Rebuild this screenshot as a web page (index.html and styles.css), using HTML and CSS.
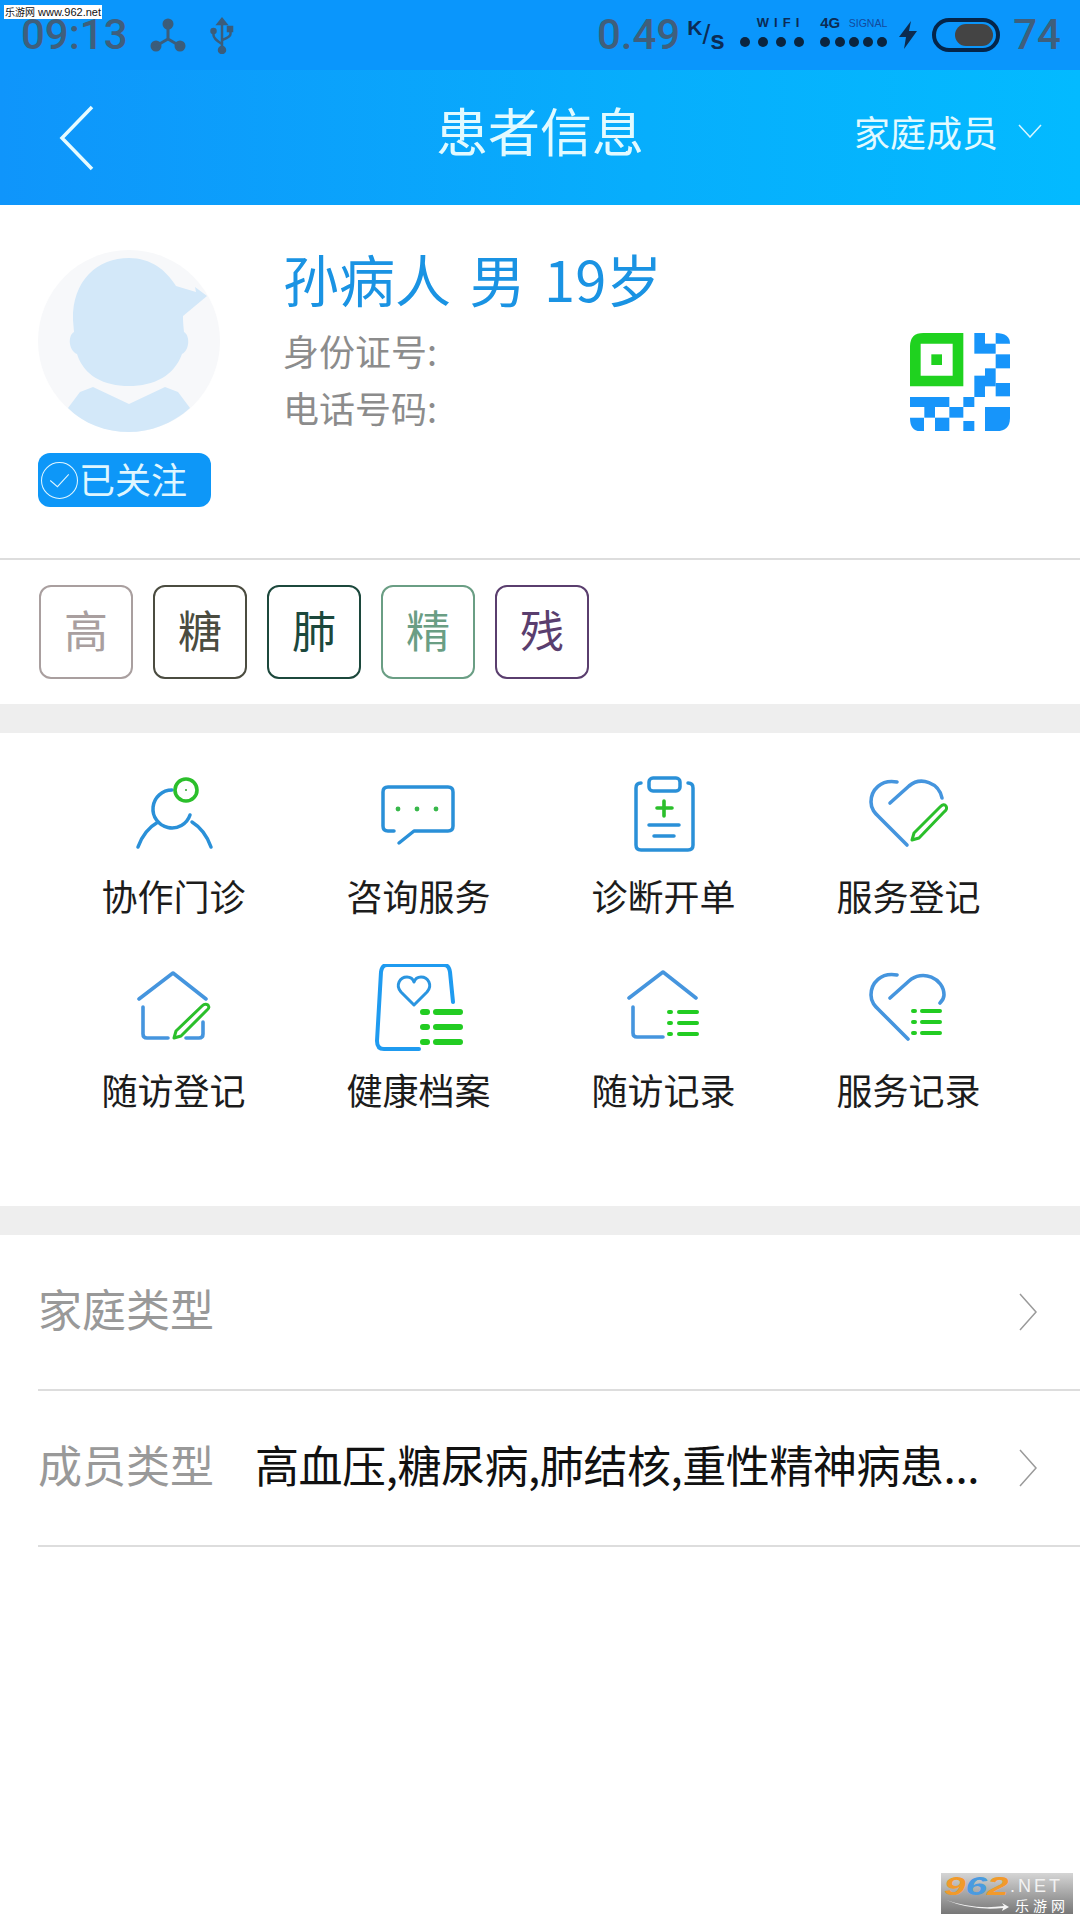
FILE: index.html
```html
<!DOCTYPE html>
<html lang="zh">
<head>
  <meta charset="UTF-8" />
  <title>患者信息</title>
  <link rel="stylesheet" href="styles.css">
</head>
<body>
  <div class="watermark"><span class="watermark-cn">乐游网</span> www.962.net</div>

  <div class="statusbar">
    <div class="status-group">
      <span class="status-num">09:13</span>
      <svg class="status-hub" viewBox="0 0 36 34">
        <g fill="#3b5d7b" stroke="#3b5d7b" stroke-width="3">
          <circle cx="18" cy="6" r="4" />
          <circle cx="6" cy="28" r="4" />
          <circle cx="30" cy="28" r="4" />
          <path d="M18 6V21L6 28M18 21L30 28" fill="none" />
        </g>
      </svg>
      <svg class="status-usb" viewBox="0 0 24 38">
        <g fill="#3b5d7b" stroke="#3b5d7b" stroke-width="2.5">
          <path d="M12 35V3" fill="none" />
          <path d="M8 8L12 3L16 8Z" />
          <circle cx="12" cy="34" r="3" />
          <circle cx="3.5" cy="15" r="2" />
          <rect x="18" y="11" width="4" height="4" />
          <path d="M3.5 15V19Q3.5 23 12 28M20.5 15V18Q20.5 21 12 24" fill="none" />
        </g>
      </svg>
    </div>
    <div class="status-group status-right">
      <span class="status-num">0.49</span>
      <span class="speed-unit"><i class="unit-k">K</i><i class="unit-slash">/</i><i class="unit-s">s</i></span>
      <div class="net-col net-wifi">
        <span class="net-label">WIFI</span>
        <div class="net-dots"><b></b><b></b><b></b><b></b></div>
      </div>
      <div class="net-col net-signal">
        <div class="net-labels"><span class="net-label net-4g">4G</span><span class="net-label net-small">SIGNAL</span></div>
        <div class="net-dots"><b></b><b></b><b></b><b></b><b></b></div>
      </div>
      <svg class="status-bolt" viewBox="0 0 18 28"><path d="M12 0L0 16H7L5 28L18 10H10Z" fill="#0c2c50" /></svg>
      <div class="battery"><span class="battery-fill"></span></div>
      <span class="status-num">74</span>
    </div>
  </div>

  <div class="navbar">
    <div class="nav-left">
      <svg class="nav-back" viewBox="0 0 36 66"><path d="M33 2L3 33L33 64" fill="none" stroke="#e6fbff" stroke-width="3.5" /></svg>
    </div>
    <div class="nav-title">患者信息</div>
    <div class="nav-right">
      <span>家庭成员</span>
      <svg class="nav-down" viewBox="0 0 24 14"><path d="M1 1L12 13L23 1" fill="none" stroke="#d8f6ff" stroke-width="1.5" /></svg>
    </div>
  </div>

  <div class="profile">
    <div class="profile-left">
      <svg class="avatar" viewBox="0 0 182 182">
        <circle cx="91" cy="91" r="91" fill="#f7f8fa" />
        <path d="M35 70C34 30 60 8 91 8C113 8 128 20 138 36L158 42L157 37L169 46L145 66C145 75 146 80 146 82C152 85 152 100 144 104C136 126 116 136 91 136C66 136 46 126 39 104C30 100 30 85 36 82Z" fill="#d3e8f9" />
        <path d="M30 158L42 142L55 137L91 154L127 137L140 142L152 158C134 174 112 182 91 182C68 182 46 174 30 158Z" fill="#d3e8f9" />
      </svg>
      <div class="follow-badge">
        <svg class="follow-check" viewBox="0 0 36 36">
          <circle cx="18" cy="18" r="17.5" fill="none" stroke="#dff6ff" stroke-width="1" />
          <path d="M9 18L16 24L27 12" fill="none" stroke="#dff6ff" stroke-width="1" />
        </svg>
        <span>已关注</span>
      </div>
    </div>
    <div class="profile-info">
      <div class="patient-name">孙病人 男 19岁</div>
      <div class="patient-line patient-line-first">身份证号:</div>
      <div class="patient-line">电话号码:</div>
    </div>
    <svg class="qr" viewBox="0 0 300 294">
      <path d="M40 0H160V160H0V40Q0 0 40 0ZM32 32V128H128V32Z" fill="#1fd21f" fill-rule="evenodd" />
      <rect x="64" y="64" width="32" height="32" fill="#1fd21f" />
      <g fill="#1795fa">
        <rect x="193" y="0" width="32" height="62" />
        <rect x="225" y="32" width="32" height="30" />
        <path d="M257 0Q300 0 300 32H257Z" />
        <rect x="257" y="64" width="43" height="42" />
        <rect x="225" y="106" width="32" height="54" />
        <rect x="193" y="128" width="32" height="64" />
        <rect x="257" y="150" width="43" height="40" />
        <rect x="0" y="192" width="118" height="30" />
        <rect x="43" y="222" width="32" height="32" />
        <rect x="118" y="222" width="42" height="32" />
        <rect x="160" y="192" width="33" height="30" />
        <path d="M0 254H42V294H30Q0 294 0 254Z" />
        <rect x="75" y="254" width="43" height="40" />
        <rect x="160" y="264" width="33" height="30" />
        <path d="M225 222H300V254Q300 294 260 294H225Z" />
      </g>
    </svg>
  </div>

  <div class="tags">
    <span class="tag tag-gao">高</span>
    <span class="tag tag-tang">糖</span>
    <span class="tag tag-fei">肺</span>
    <span class="tag tag-jing">精</span>
    <span class="tag tag-can">残</span>
  </div>

  <div class="band"></div>

  <div class="menu">
    <div class="menu-item">
      <svg class="menu-icon" viewBox="0 0 100 100">
        <g class="line-blue">
          <path d="M48 20A19 19 0 1 0 66 45" />
          <path d="M14 77Q20 60 34 52M68 52Q81 60 87 77" />
        </g>
        <circle class="line-green" cx="62" cy="20" r="11" />
        <circle cx="62" cy="20" r="1" fill="#2fa02f" />
      </svg>
      <div class="menu-label">协作门诊</div>
    </div>
    <div class="menu-item">
      <svg class="menu-icon" viewBox="0 0 100 100">
        <path class="line-blue" d="M25 61H19Q14 61 14 56V22Q14 17 19 17H79Q84 17 84 22V56Q84 61 79 61H45L30 73" />
        <g fill="#38b84a">
          <circle cx="29" cy="39" r="2.4" />
          <circle cx="48" cy="39" r="2.4" />
          <circle cx="67" cy="39" r="2.4" />
        </g>
      </svg>
      <div class="menu-label">咨询服务</div>
    </div>
    <div class="menu-item">
      <svg class="menu-icon" viewBox="0 0 100 100">
        <g class="line-blue">
          <path d="M27 13Q22 13 22 18V75Q22 80 27 80H74Q79 80 79 75V18Q79 13 74 13" />
          <rect x="35" y="8" width="31" height="13" rx="4" />
          <path d="M35 55H65M40 66H60" />
        </g>
        <path class="line-green" d="M43 38H58M50 31V46" />
      </svg>
      <div class="menu-label">诊断开单</div>
    </div>
    <div class="menu-item">
      <svg class="menu-icon" viewBox="0 0 100 100">
        <path class="line-heart" d="M38 12C22 9 12 20 12 32C12 40 17 44 21 48L48 75M31 33L50 16C62 6 80 13 83 28" />
        <path class="line-pen" d="M55 63L81 37Q85 33 87 36Q89 39 85 42L60 68L53 70Z" />
      </svg>
      <div class="menu-label">服务登记</div>
    </div>
    <div class="menu-item">
      <svg class="menu-icon" viewBox="0 4 100 100">
        <path class="line-heart" d="M15 39L49 13L82 39M19 47V74Q19 78 23 78H44M62 78H75Q79 78 79 74V62" />
        <path class="line-pen" d="M52 71L78 46Q81 43 84 45Q86 48 83 50L57 76L50 78Z" />
      </svg>
      <div class="menu-label">随访登记</div>
    </div>
    <div class="menu-item">
      <svg class="menu-icon" viewBox="0 4 100 100">
        <path class="line-doc" d="M84 42L81 12Q80 5 75 5H18Q13 5 12 12L8 81Q8 89 15 89H50" />
        <path class="line-doc line-thin" d="M45 45L32 32C26 25 31 17 38 17C41 17 44 19 45 22C46 19 49 17 52 17C59 17 64 25 58 32Z" />
        <path class="line-list" d="M54 52H58M67 52H91M54 67H58M67 67H91M54 82H58M67 82H91" />
      </svg>
      <div class="menu-label">健康档案</div>
    </div>
    <div class="menu-item">
      <svg class="menu-icon" viewBox="0 4 100 100">
        <path class="line-heart" d="M15 38L49 12L82 38M19 47V73Q19 77 23 77H49" />
        <path class="line-list line-list-small" d="M55 52H57M65 52H83M55 63H57M65 63H83M55 74H57M65 74H83" />
      </svg>
      <div class="menu-label">随访记录</div>
    </div>
    <div class="menu-item">
      <svg class="menu-icon" viewBox="0 4 100 100">
        <path class="line-heart" d="M38 15C22 12 12 23 12 35C12 43 17 47 21 51L49 79M31 38L50 21C63 9 85 18 85 35C85 38 83 41 81 43" />
        <path class="line-list line-list-small" d="M54 51H56M63 51H81M54 62H56M63 62H81M54 73H56M63 73H81" />
      </svg>
      <div class="menu-label">服务记录</div>
    </div>
  </div>

  <div class="band"></div>

  <div class="info-row">
    <span class="info-label">家庭类型</span>
    <span class="info-value"></span>
    <svg class="info-arrow" viewBox="0 0 18 38"><path d="M1 1L17 19L1 37" fill="none" stroke="#9a9a9a" stroke-width="1.5" /></svg>
  </div>
  <div class="info-row">
    <span class="info-label">成员类型</span>
    <span class="info-value">高血压,糖尿病,肺结核,重性精神病患...</span>
    <svg class="info-arrow" viewBox="0 0 18 38"><path d="M1 1L17 19L1 37" fill="none" stroke="#9a9a9a" stroke-width="1.5" /></svg>
  </div>

  <div class="site-logo">
    <div class="logo-top">
      <span class="logo-num"><span class="logo-orange">9</span><span class="logo-blue">6</span><span class="logo-orange">2</span></span>
      <span class="logo-net">.NET</span>
    </div>
    <div class="logo-bottom">
      <svg class="logo-swoosh" viewBox="0 0 66 14"><path d="M2 2Q30 12 60 8L58 5L65 9L58 13L59 10Q28 13 2 2Z" fill="#f4f4f4" /></svg>
      <span class="logo-cn">乐游网</span>
    </div>
  </div>
</body>
</html>
```

FILE: styles.css
```css
* {
  box-sizing: border-box;
}
body {
  margin: 0;
  width: 1080px;
  height: 1920px;
  overflow: hidden;
  position: relative;
  background: #fff;
  font-family: "Noto Sans CJK SC", "Noto Sans", sans-serif;
}

.watermark {
  position: absolute;
  left: 4px;
  top: 5px;
  width: 98px;
  height: 14px;
  background: #fff;
  color: #111;
  font-family: "Liberation Sans", "Noto Sans CJK SC", sans-serif;
  font-size: 11px;
  line-height: 14px;
  white-space: nowrap;
  padding-left: 1px;
}
.watermark-cn {
  font-family: "Noto Sans CJK SC", sans-serif;
  font-size: 10px;
}

.statusbar {
  height: 70px;
  background: #0a96fc;
  display: flex;
  justify-content: space-between;
  align-items: center;
  padding: 0 19px 0 21px;
}
.status-group {
  display: flex;
  align-items: center;
}
.status-num {
  font-family: Roboto, sans-serif;
  font-size: 42px;
  font-weight: 500;
  line-height: 68px;
  color: #3f5f7c;
}
.status-hub {
  width: 36px;
  height: 34px;
  margin-left: 22px;
}
.status-usb {
  width: 24px;
  height: 38px;
  margin-left: 24px;
}
.speed-unit {
  display: flex;
  height: 36px;
  width: 38px;
  margin-left: 7px;
  color: #0c2c55;
  font-family: "Liberation Sans", sans-serif;
  font-weight: 700;
}
.speed-unit i {
  font-style: normal;
  line-height: 1;
}
.unit-k {
  font-size: 21px;
  align-self: flex-start;
}
.unit-slash {
  font-size: 28px;
  font-weight: 400;
  align-self: center;
}
.unit-s {
  font-size: 26px;
  align-self: flex-end;
  margin-top: -4px;
}
.net-col {
  display: flex;
  flex-direction: column;
  height: 30px;
  margin-top: -6px;
  justify-content: space-between;
}
.net-wifi {
  width: 64px;
  margin-left: 15px;
  align-items: flex-end;
}
.net-signal {
  width: 67px;
  margin-left: 16px;
}
.net-label {
  font-family: "Liberation Sans", sans-serif;
  font-size: 13px;
  font-weight: 700;
  line-height: 12px;
  color: #0c2c55;
  letter-spacing: 5px;
}
.net-labels {
  display: flex;
  align-items: flex-end;
  justify-content: space-between;
}
.net-4g {
  letter-spacing: 0;
  font-size: 15px;
}
.net-small {
  font-size: 10.5px;
  font-weight: 400;
  letter-spacing: 0;
  color: #134a9c;
}
.net-dots {
  display: flex;
  width: 100%;
  justify-content: space-between;
}
.net-dots b {
  width: 10px;
  height: 10px;
  border-radius: 50%;
  background: #0a2540;
}
.status-bolt {
  width: 18px;
  height: 28px;
  margin-left: 12px;
}
.battery {
  width: 68px;
  height: 34px;
  margin: 0 13px 0 15px;
  border: 4px solid #04254a;
  border-radius: 17px;
  display: flex;
  justify-content: flex-end;
  align-items: center;
  padding-right: 3px;
}
.battery-fill {
  width: 38px;
  height: 22px;
  border-radius: 11px;
  background: #444;
}

.navbar {
  height: 135px;
  background: linear-gradient(90deg, #0f95fb, #07aefc 60%, #03baff);
  display: grid;
  grid-template-columns: 1fr auto 1fr;
  align-items: center;
  color: #e2faff;
}
.nav-left {
  padding-left: 59px;
  display: flex;
}
.nav-back {
  width: 36px;
  height: 66px;
}
.nav-title {
  font-size: 52px;
  line-height: 64px;
  margin-top: -15px;
}
.nav-right {
  display: flex;
  justify-content: flex-end;
  align-items: center;
  padding-right: 38px;
  font-size: 36px;
  line-height: 50px;
  margin-top: -14px;
}
.nav-down {
  width: 24px;
  height: 14px;
  margin-left: 20px;
}

.profile {
  height: 355px;
  border-bottom: 2px solid #ddd;
  display: flex;
  padding: 45px 70px 0 38px;
}
.profile-left {
  width: 182px;
}
.avatar {
  width: 182px;
  height: 182px;
  display: block;
}
.follow-badge {
  width: 173px;
  height: 54px;
  margin-top: 21px;
  border-radius: 12px;
  background: #0d97f8;
  color: #dff6ff;
  font-size: 36px;
  line-height: 50px;
  display: flex;
  align-items: center;
  padding: 0 0 4px 3px;
}
.follow-check {
  width: 37px;
  height: 37px;
  margin: 4px 1px 0 0;
}
.profile-info {
  margin: -4px 0 0 63px;
}
.patient-name {
  font-size: 56px;
  line-height: 64px;
  color: #1a93e3;
  word-spacing: 6px;
}
.patient-line {
  font-size: 36px;
  line-height: 57px;
  color: #8c8c8c;
}
.patient-line-first {
  margin-top: 12px;
}
.qr {
  width: 100px;
  height: 98px;
  margin: 83px 0 0 auto;
}

.tags {
  height: 144px;
  display: flex;
  gap: 20px;
  padding: 25px 0 0 39px;
}
.tag {
  width: 94px;
  height: 94px;
  border: 2px solid;
  border-radius: 12px;
  font-size: 44px;
  line-height: 84px;
  text-align: center;
}
.tag-gao {
  color: #a99f9f;
}
.tag-tang {
  color: #4b4c40;
}
.tag-fei {
  color: #1c483c;
}
.tag-jing {
  color: #6a9e84;
}
.tag-can {
  color: #5a3e6e;
}

.band {
  height: 29px;
  background: #eee;
}

.menu {
  height: 473px;
  padding: 37px 51px 0;
  display: grid;
  grid-template-columns: repeat(4, 245px);
  grid-auto-rows: 152px;
  row-gap: 42px;
}
.menu-item {
  display: flex;
  flex-direction: column;
  align-items: center;
}
.menu-icon {
  width: 100px;
  height: 100px;
  fill: none;
}
.menu-label {
  font-size: 36px;
  line-height: 50px;
  color: #1c1c1c;
}
.line-blue {
  fill: none;
  stroke: #2a90d8;
  stroke-width: 3.5;
  stroke-linecap: round;
  stroke-linejoin: round;
}
.line-heart {
  fill: none;
  stroke: #4595de;
  stroke-width: 3.6;
  stroke-linecap: round;
  stroke-linejoin: round;
}
.line-green {
  fill: none;
  stroke: #2bbf2b;
  stroke-width: 3.6;
  stroke-linecap: round;
}
.line-pen {
  fill: #fff;
  stroke: #2bbf2b;
  stroke-width: 3;
  stroke-linejoin: round;
}
.line-doc {
  fill: none;
  stroke: #1f9bf0;
  stroke-width: 4;
  stroke-linecap: round;
  stroke-linejoin: round;
}
.line-thin {
  stroke-width: 3;
  stroke: #2a95e0;
}
.line-list {
  fill: none;
  stroke: #22cc22;
  stroke-width: 6;
  stroke-linecap: round;
}
.line-list-small {
  stroke-width: 4;
}

.info-row {
  height: 156px;
  margin-left: 38px;
  border-bottom: 2px solid #ddd;
  display: flex;
  align-items: center;
  padding-right: 43px;
}
.info-label {
  font-size: 44px;
  color: #999;
  line-height: 60px;
  white-space: nowrap;
  margin-bottom: 8px;
}
.info-value {
  flex: 1;
  min-width: 0;
  margin: 0 20px 8px 41px;
  font-size: 44px;
  line-height: 60px;
  letter-spacing: -0.45px;
  color: #111;
  white-space: nowrap;
}
.info-arrow {
  width: 18px;
  height: 38px;
}

.site-logo {
  position: absolute;
  left: 941px;
  top: 1873px;
  width: 132px;
  height: 41px;
  background: linear-gradient(180deg, #d5d5d5, #777);
  padding: 2px 3px 0;
}
.logo-top {
  display: flex;
  align-items: center;
  height: 22px;
}
.logo-num {
  display: block;
  width: 66px;
  font-family: "Liberation Sans", sans-serif;
  font-weight: 700;
  font-style: italic;
  font-size: 25px;
  line-height: 22px;
  transform: scaleX(1.55);
  transform-origin: left center;
}
.logo-orange {
  color: #f19a2c;
}
.logo-blue {
  color: #4a9be0;
}
.logo-net {
  font-family: "Liberation Sans", sans-serif;
  font-size: 18px;
  line-height: 22px;
  letter-spacing: 3px;
  color: #f2f2f2;
}
.logo-bottom {
  display: flex;
  align-items: center;
  height: 16px;
}
.logo-swoosh {
  width: 66px;
  height: 14px;
}
.logo-cn {
  margin-left: 5px;
  font-size: 14px;
  line-height: 16px;
  letter-spacing: 4px;
  color: #fff;
  white-space: nowrap;
}
```
